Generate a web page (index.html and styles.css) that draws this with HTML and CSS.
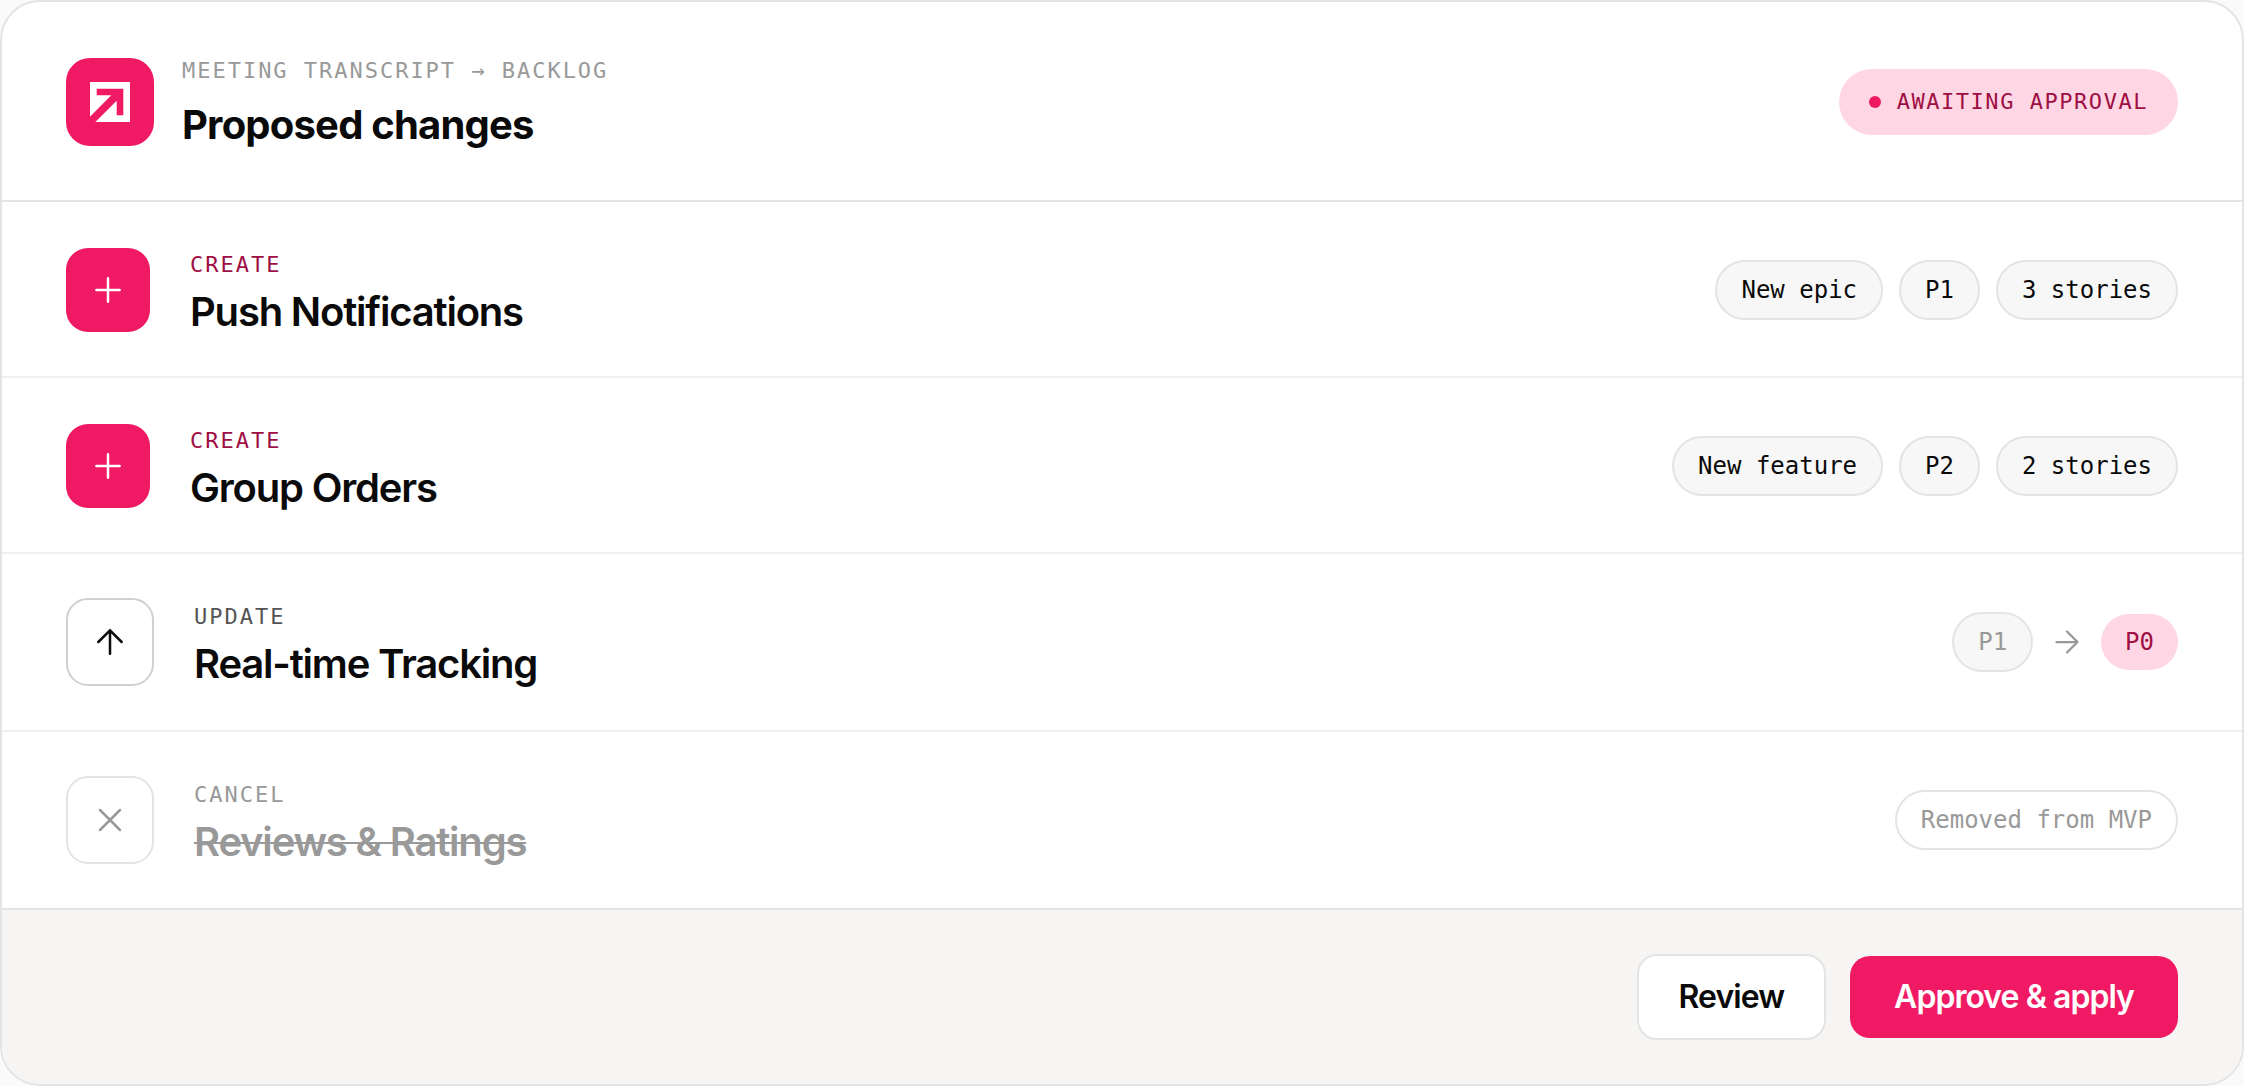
FILE: index.html
```html
<!DOCTYPE html>
<html lang="en">
<head>
    <meta charset="UTF-8">
    <meta name="viewport" content="width=device-width, initial-scale=1.0">
    <title>Proposed changes</title>
    <link rel="stylesheet" href="styles.css">
</head>
<body>
    <main class="card">
        <header class="card-header">
            <div class="logo">
                <svg viewBox="0 0 40 40" width="40" height="40" aria-hidden="true">
                    <path fill="#fff" fill-rule="evenodd" d="M0 0H40V40H5.3L26.7 18.7V33.3H33.3V6.7H6.7V13.3H21.3L0 34.7Z"/>
                </svg>
            </div>
            <div class="header-text">
                <p class="label">MEETING TRANSCRIPT → BACKLOG</p>
                <h1>Proposed changes</h1>
            </div>
            <div class="status"><span class="dot"></span>AWAITING APPROVAL</div>
        </header>

        <ul class="changes">
            <li class="change create">
                <div class="change-icon">
                    <svg class="icon" viewBox="0 0 24 24" aria-hidden="true"><path d="M5 12h14M12 5v14"/></svg>
                </div>
                <div class="change-text">
                    <p class="label">CREATE</p>
                    <h2>Push Notifications</h2>
                </div>
                <div class="chips">
                    <span class="chip">New epic</span>
                    <span class="chip">P1</span>
                    <span class="chip">3 stories</span>
                </div>
            </li>
            <li class="change create">
                <div class="change-icon">
                    <svg class="icon" viewBox="0 0 24 24" aria-hidden="true"><path d="M5 12h14M12 5v14"/></svg>
                </div>
                <div class="change-text">
                    <p class="label">CREATE</p>
                    <h2>Group Orders</h2>
                </div>
                <div class="chips">
                    <span class="chip">New feature</span>
                    <span class="chip">P2</span>
                    <span class="chip">2 stories</span>
                </div>
            </li>
            <li class="change update">
                <div class="change-icon">
                    <svg class="icon" viewBox="0 0 24 24" aria-hidden="true"><path d="m5 12 7-7 7 7M12 19V5"/></svg>
                </div>
                <div class="change-text">
                    <p class="label">UPDATE</p>
                    <h2>Real-time Tracking</h2>
                </div>
                <div class="chips">
                    <span class="chip chip-old">P1</span>
                    <svg class="icon arrow" viewBox="0 0 24 24" aria-hidden="true"><path d="M5 12h14m-7-7 7 7-7 7"/></svg>
                    <span class="chip chip-new">P0</span>
                </div>
            </li>
            <li class="change cancel">
                <div class="change-icon">
                    <svg class="icon" viewBox="0 0 24 24" aria-hidden="true"><path d="M18 6 6 18M6 6l12 12"/></svg>
                </div>
                <div class="change-text">
                    <p class="label">CANCEL</p>
                    <h2>Reviews &amp; Ratings</h2>
                </div>
                <div class="chips">
                    <span class="chip chip-removed">Removed from MVP</span>
                </div>
            </li>
        </ul>

        <footer class="card-footer">
            <button type="button" class="btn">Review</button>
            <button type="button" class="btn btn-primary">Approve &amp; apply</button>
        </footer>
    </main>
</body>
</html>
```
FILE: styles.css
```css
* {
    box-sizing: border-box;
}
body {
    margin: 0;
    background-color: #fafafa;
    color: #0a0a0a;
    font-family: Inter, "Open Sans", sans-serif;
}
h1, h2, p, ul {
    margin: 0;
    padding: 0;
}
.card {
    background-color: #fff;
    border: 2px solid #e4e4e4;
    border-radius: 40px;
    overflow: hidden;
}
.card-header {
    display: flex;
    align-items: center;
    gap: 28px;
    padding: 53px 64px 51px;
    border-bottom: 2px solid #e4e4e4;
}
.logo {
    display: flex;
    align-items: center;
    justify-content: center;
    width: 88px;
    height: 88px;
    border-radius: 24px;
    background-color: #f01a64;
}
.label {
    font-family: "DejaVu Sans Mono", monospace;
    font-size: 22px;
    line-height: 32px;
    letter-spacing: 0.09em;
    color: #999;
}
h1 {
    margin-top: 14px;
    font-size: 40px;
    line-height: 48px;
    font-weight: 700;
    letter-spacing: -0.02em;
}
.status {
    display: flex;
    align-items: center;
    gap: 16px;
    margin-left: auto;
    padding: 17px 30px;
    border-radius: 33px;
    background-color: #ffd6e3;
    color: #9e0f43;
    font-family: "DejaVu Sans Mono", monospace;
    font-size: 22px;
    line-height: 32px;
    letter-spacing: 0.07em;
}
.dot {
    width: 12px;
    height: 12px;
    border-radius: 50%;
    background-color: #f01a64;
}
.changes {
    list-style: none;
}
.change {
    display: flex;
    align-items: center;
    gap: 40px;
    padding: 44px 64px;
    border-bottom: 2px solid #f0f0f0;
}
.change:last-child {
    border-bottom: none;
}
.change-icon {
    display: flex;
    align-items: center;
    justify-content: center;
    width: 88px;
    height: 88px;
    border: 2px solid #d0d0d0;
    border-radius: 22px;
}
.icon {
    width: 40px;
    height: 40px;
    fill: none;
    stroke: currentColor;
    stroke-width: 1.5;
    stroke-linecap: round;
    stroke-linejoin: round;
}
h2 {
    margin-top: 12px;
    font-size: 40px;
    line-height: 38px;
    font-weight: 600;
    letter-spacing: -0.03em;
}
.create {
    padding-top: 46px;
}
.create .change-icon {
    width: 84px;
    height: 84px;
    border: none;
    background-color: #f01a64;
    color: #fff;
}
.create .label {
    color: #9e0f43;
}
.update .label {
    color: #555;
}
.cancel .change-icon {
    border-color: #e4e4e4;
    color: #999;
}
.cancel h2 {
    color: #999;
    text-decoration: line-through;
    text-decoration-thickness: 2px;
}
.chips {
    display: flex;
    align-items: center;
    gap: 16px;
    margin-left: auto;
}
.chip {
    padding: 12px 24px;
    border: 2px solid #e4e4e4;
    border-radius: 30px;
    background-color: #f7f7f7;
    font-family: "DejaVu Sans Mono", monospace;
    font-size: 24px;
    line-height: 32px;
}
.chip-old {
    color: #999;
}
.chip-new {
    border: none;
    background-color: #ffd6e3;
    color: #9e0f43;
}
.chip-removed {
    background-color: #fff;
    color: #999;
}
.arrow {
    width: 36px;
    height: 36px;
    color: #999;
}
.card-footer {
    display: flex;
    align-items: center;
    justify-content: flex-end;
    gap: 24px;
    padding: 44px 64px;
    border-top: 2px solid #e4e4e4;
    background-color: #f6f5f3;
}
.btn {
    padding: 21px 40px;
    border: 2px solid #e4e4e4;
    border-radius: 20px;
    background-color: #fff;
    color: #0a0a0a;
    font-family: inherit;
    font-size: 32px;
    line-height: 40px;
    font-weight: 600;
    letter-spacing: -0.03em;
    cursor: pointer;
}
.btn-primary {
    padding: 21px 44px;
    border: none;
    background-color: #f01a64;
    color: #fff;
}
```
